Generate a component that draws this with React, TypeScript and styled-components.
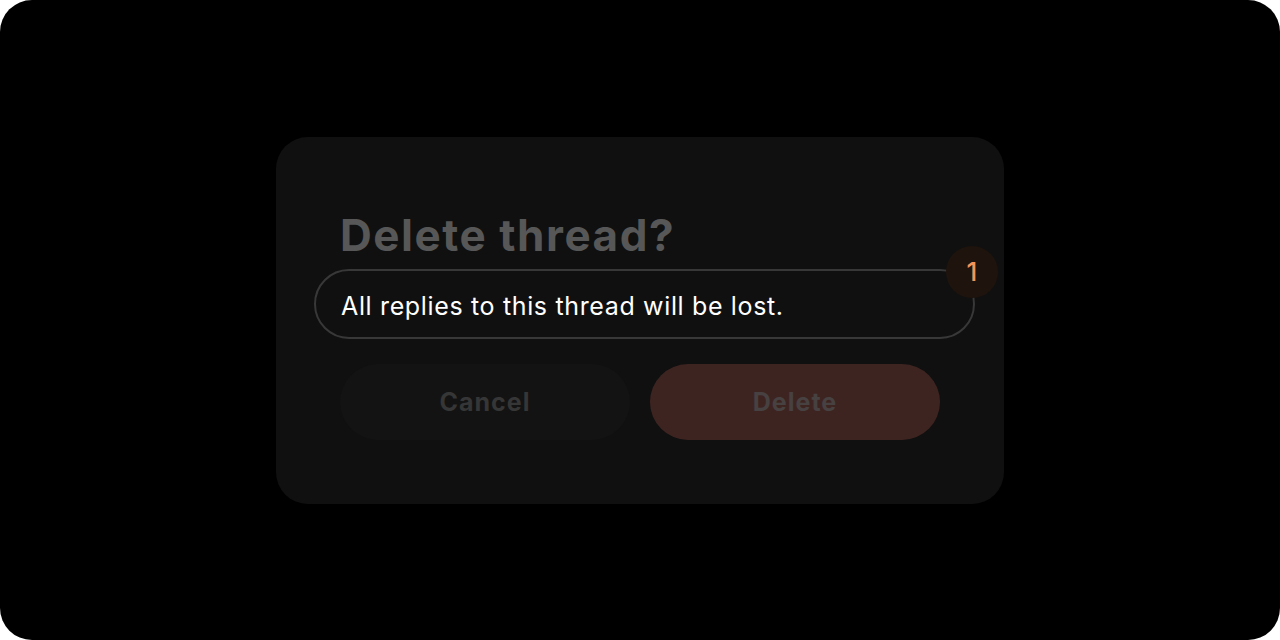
import React from "react";
import styled, { createGlobalStyle } from "styled-components";

const Global = createGlobalStyle`
  html, body {
    margin: 0;
    padding: 0;
    background: #ffffff;
  }
  * {
    box-sizing: border-box;
  }
`;

const Frame = styled.div`
  width: 1280px;
  height: 640px;
  background: #000000;
  border-radius: 32px;
  display: flex;
  align-items: center;
  justify-content: center;
  font-family: "Inter", "Open Sans", sans-serif;
`;

const Card = styled.div`
  width: 728px;
  height: 367px;
  background: #101010;
  border-radius: 32px;
  padding: 73px 64px 0;
  display: flex;
  flex-direction: column;
`;

const Title = styled.h2`
  margin: 0;
  font-size: 44px;
  line-height: 51px;
  font-weight: 700;
  letter-spacing: 1.55px;
  color: #575757;
`;

const Highlight = styled.div`
  position: relative;
  margin: 8px -35px 0 -26px;
  height: 70px;
  border: 2px solid #383838;
  border-radius: 35px;
  padding: 5px 0 0 25px;
  display: flex;
  align-items: center;
`;

const Message = styled.p`
  margin: 0;
  font-size: 25px;
  font-weight: 400;
  letter-spacing: 0.65px;
  color: #ffffff;
`;

const Badge = styled.span`
  position: absolute;
  top: -25px;
  right: -25px;
  width: 52px;
  height: 52px;
  border-radius: 50%;
  background: #1e130d;
  color: #f5935a;
  font-size: 26px;
  font-weight: 500;
  display: flex;
  align-items: center;
  justify-content: center;
`;

const Actions = styled.div`
  display: flex;
  gap: 20px;
  margin-top: 25px;
`;

const Button = styled.button<{ $danger?: boolean }>`
  width: 290px;
  height: 76px;
  border: none;
  border-radius: 38px;
  background: ${(p) => (p.$danger ? "#3e2421" : "#131313")};
  color: ${(p) => (p.$danger ? "#474141" : "#363636")};
  font-family: inherit;
  font-size: 25px;
  font-weight: 700;
  letter-spacing: 1px;
  padding-top: 2px;
  cursor: pointer;
`;

export default function App() {
  return (
    <>
      <Global />
      <Frame>
        <Card>
          <Title>Delete thread?</Title>
          <Highlight>
            <Message>All replies to this thread will be lost.</Message>
            <Badge>1</Badge>
          </Highlight>
          <Actions>
            <Button>Cancel</Button>
            <Button $danger>Delete</Button>
          </Actions>
        </Card>
      </Frame>
    </>
  );
}
